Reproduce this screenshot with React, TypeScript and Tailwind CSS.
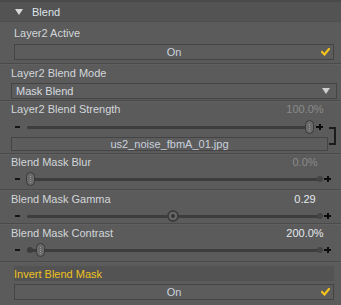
import React from "react";

const Check = () => (
  <svg width="9" height="8" viewBox="0 0 9 8" className="absolute right-[3px] top-[3px]">
    <path d="M1 4 L3.5 6.5 L8 1" stroke="#f2c21a" strokeWidth="2.2" fill="none" strokeLinecap="square" />
  </svg>
);

const Sep = () => (
  <div className="flex flex-col">
    <div className="h-px bg-[#4a4a4a]" />
    <div className="h-px bg-[#606060]" />
  </div>
);

const Label = ({ children, value, dim }: { children: React.ReactNode; value?: string; dim?: boolean }) => (
  <div className="flex h-[14px] items-center pl-[11px] pr-[11px]">
    <span className="flex-1 text-[#d2d6da]">{children}</span>
    {value !== undefined && (
      <span className={`w-[50px] text-center ${dim ? "text-[#8a8a8a]" : "text-[#e4e8ee]"}`}>{value}</span>
    )}
  </div>
);

type ThumbKind = "oval" | "round";

const Slider = ({
  thumbX,
  kind,
  trackEnd,
  plusRight,
  leftDot,
}: {
  thumbX: number;
  kind: ThumbKind;
  trackEnd: number;
  plusRight: number;
  leftDot?: boolean;
}) => (
  <div className="relative h-[14px]">
    <div className="absolute left-[15px] top-[6px] h-[2px] w-[5px] bg-[#151515]" />
    <div
      className="absolute top-[6px] h-[3px] rounded-full bg-[#3d3d3d]"
      style={{ left: 27, width: trackEnd - 27 }}
    />
    {leftDot && <div className="absolute left-[27px] top-[4px] h-[6px] w-[6px] rounded-full bg-[#3d3d3d]" />}
    <div
      className="absolute top-[4px] h-[6px] w-[6px] rounded-full bg-[#444]"
      style={{ left: trackEnd - 4 }}
    />
    {kind === "oval" ? (
      <div
        className="absolute top-[0px] flex h-[14px] w-[9px] items-center justify-center rounded-full border border-[#3a3a3a] bg-[#6a6a6a]"
        style={{ left: thumbX }}
      >
        <div className="h-[7px] w-px border-l border-dotted border-[#9a9a9a]" />
      </div>
    ) : (
      <div
        className="absolute top-[1px] flex h-[12px] w-[12px] items-center justify-center rounded-full border-2 border-[#3e3e3e] bg-[#686868]"
        style={{ left: thumbX }}
      >
        <div className="h-[4px] w-[4px] rounded-full bg-[#333]" />
      </div>
    )}
    <div className="absolute top-[6px] h-[2px] w-[7px] bg-[#0c0c0c]" style={{ left: plusRight - 7 }} />
    <div className="absolute top-[4px] h-[6px] w-[2px] bg-[#0c0c0c]" style={{ left: plusRight - 4.5 }} />
  </div>
);

export default function App() {
  return (
    <div
      className="h-[305px] w-[341px] overflow-hidden bg-[#5b5b5b] text-[11px] leading-[14px]"
      style={{ fontFamily: '"Liberation Sans", Arial, sans-serif' }}
    >
      {/* Header */}
      <div className="flex h-[22px] items-center border-t-2 border-b border-t-[#4a4a4a] border-b-[#4e4e4e] bg-[#535353] pl-[15px]">
        <svg width="8" height="6" viewBox="0 0 8 6" className="mr-[9px]">
          <path d="M0 0 H8 L4 6 Z" fill="#d8d8d8" />
        </svg>
        <span className="text-[#dde2e8]">Blend</span>
      </div>

      {/* Layer2 Active */}
      <div className="flex h-[41px] flex-col pt-[4px]">
        <div className="pl-[14px] text-[#d2d6da]">Layer2 Active</div>
        <div className="relative mx-[14px] mr-[7px] mt-[4px] flex h-[16px] items-center justify-center border border-[#444] bg-[#5c5c5c] text-[#c9d1dc]">
          On
          <Check />
        </div>
      </div>
      <Sep />

      {/* Blend Mode */}
      <div className="flex h-[35px] flex-col pt-[1px]">
        <div className="pl-[11px] text-[#d2d6da]">Layer2 Blend Mode</div>
        <div className="relative ml-[11px] mr-[4px] mt-[3px] flex h-[16px] items-center border border-[#444] bg-[#5c5c5c] pl-[4px] text-[#d6dbe0]">
          Mask Blend
          <svg width="8" height="6" viewBox="0 0 8 6" className="absolute right-[6px] top-[4px]">
            <path d="M0 0 H8 L4 6 Z" fill="#cfcfcf" />
          </svg>
        </div>
      </div>
      <Sep />

      {/* Strength */}
      <div className="flex h-[51px] flex-col">
        <Label value="100.0%" dim>
          Layer2 Blend Strength
        </Label>
        <div className="flex">
          <div className="flex w-[328px] flex-col">
            <div className="mt-[4px]">
              <Slider thumbX={305} kind="oval" trackEnd={310} plusRight={323} />
            </div>
            <div className="ml-[11px] mt-[3px] flex h-[14px] items-center justify-center border border-[#444] bg-[#5c5c5c] text-[#c9d1dc]">
              us2_noise_fbmA_01.jpg
            </div>
          </div>
          <div className="ml-[1px] mt-[11px] h-[18px] w-[7px] border-y-2 border-r-2 border-[#1c1c1c]" />
        </div>
      </div>
      <Sep />

      {/* Blur */}
      <div className="flex h-[34px] flex-col">
        <Label value="0.0%" dim>
          Blend Mask Blur
        </Label>
        <div className="mt-[3px]">
          <Slider thumbX={26} kind="oval" trackEnd={321} plusRight={331} />
        </div>
      </div>
      <Sep />

      {/* Gamma */}
      <div className="flex h-[32px] flex-col pt-[1px]">
        <Label value="0.29">Blend Mask Gamma</Label>
        <div className="mt-[3px]">
          <Slider thumbX={167} kind="round" trackEnd={321} plusRight={331} />
        </div>
      </div>
      <Sep />

      {/* Contrast */}
      <div className="flex h-[36px] flex-col pt-[1px]">
        <Label value="200.0%">Blend Mask Contrast</Label>
        <div className="mt-[3px]">
          <Slider thumbX={36} kind="oval" trackEnd={321} plusRight={331} leftDot />
        </div>
      </div>
      <Sep />

      {/* Invert */}
      <div className="flex flex-col pt-[3px]">
        <div className="mx-[14px] mr-[7px] flex h-[15px] items-center bg-[#535353] text-[#eec21e]">Invert Blend Mask</div>
        <div className="relative mx-[14px] mr-[7px] mt-[3px] flex h-[16px] items-center justify-center border border-[#444] bg-[#5c5c5c] text-[#c9d1dc]">
          On
          <Check />
        </div>
      </div>
    </div>
  );
}
